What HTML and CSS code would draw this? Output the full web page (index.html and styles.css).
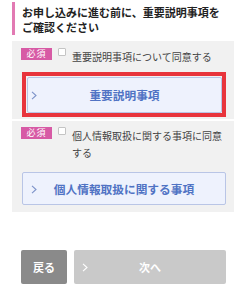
FILE: index.html
```html
<!DOCTYPE html>
<html lang="ja">
<head>
<meta charset="utf-8">
<link rel="stylesheet" href="styles.css">
</head>
<body>
<div class="page">
  <h2 class="title">お申し込みに進む前に、重要説明事項を<br>ご確認ください</h2>

  <div class="panel panel-first">
    <div class="agree">
      <span class="badge">必須</span>
      <span class="check"></span>
      <span class="agree-text">重要説明事項について同意する</span>
    </div>
    <div class="focus-ring">
      <div class="link-btn link-btn-inner">
        <svg class="chev" width="6" height="9" viewBox="0 0 6 9"><path d="M1 0.8 L5 4.5 L1 8.2" fill="none" stroke="#7d93c9" stroke-width="1.1"/></svg>
        <span class="link-label">重要説明事項</span>
      </div>
    </div>
  </div>

  <div class="panel panel-second">
    <div class="agree">
      <span class="badge">必須</span>
      <span class="check"></span>
      <span class="agree-text">個人情報取扱に関する事項に同意する</span>
    </div>
    <div class="link-btn link-btn-plain">
      <svg class="chev" width="6" height="9" viewBox="0 0 6 9"><path d="M1 0.8 L5 4.5 L1 8.2" fill="none" stroke="#7d93c9" stroke-width="1.1"/></svg>
      <span class="link-label">個人情報取扱に関する事項</span>
    </div>
  </div>

  <div class="actions">
    <div class="btn-back">戻る</div>
    <div class="btn-next">
      <svg class="chev-next" width="6" height="9" viewBox="0 0 6 9"><path d="M1 0.8 L5 4.5 L1 8.2" fill="none" stroke="#ffffff" stroke-width="1.1"/></svg>
      <span>次へ</span>
    </div>
  </div>
</div>
</body>
</html>
```

FILE: styles.css
```css
* { box-sizing: border-box; }
html, body { margin: 0; padding: 0; background: #ffffff; }
body {
  font-family: "Noto Sans CJK JP", "Noto Sans", sans-serif;
  color: #333333;
}
.page {
  width: 247px;
  padding: 2px 13px 0 12px;
}
.title {
  margin: 0;
  font-size: 11px;
  font-weight: bold;
  line-height: 15px;
  padding: 3px 0 0 7px;
  height: 33px;
  border-left: 3px solid #e27ab3;
  color: #222222;
}
.panel {
  background: #f1f1f1;
  padding: 7px 9px 2px 9px;
}
.panel-first { margin-top: 6px; }
.panel-second {
  margin-top: 2px;
  padding-top: 6px;
  padding-bottom: 7px;
}
.agree {
  display: flex;
  align-items: flex-start;
}
.badge {
  flex: none;
  width: 31px;
  height: 12px;
  background: #d75aa5;
  color: #ffffff;
  font-size: 9px;
  line-height: 12px;
  text-align: center;
  letter-spacing: 1px;
}
.check {
  flex: none;
  width: 8px;
  height: 8px;
  margin-left: 6px;
  background: #ffffff;
  border: 1px solid #c4c4c4;
  border-radius: 1px;
}
.agree-text {
  margin-left: 6px;
  font-size: 10px;
  line-height: 17px;
  color: #444444;
}
.focus-ring {
  margin: 7px -1px 0 1px;
  border: 4px solid #e8343c;
  padding: 1px 0 0 1px;
  height: 45px;
}
.link-btn {
  display: flex;
  align-items: center;
  position: relative;
  justify-content: center;
  background: #eef2fd;
  border: 1px solid #b9c5e6;
  border-radius: 2px;
}
.link-btn-inner {
  height: 36px;
}
.link-btn-plain {
  margin: 11px -1px 0 1px;
  height: 33px;
}
.chev {
  position: absolute;
  left: 8px;
  top: 50%;
  margin-top: -4px;
}
.link-btn-inner .chev { left: 3px; }
.link-label {
  font-size: 11.7px;
  font-weight: bold;
  color: #5073c4;
  line-height: 16px;
}
.actions {
  display: flex;
  gap: 7px;
  margin: 38px 0 0 9px;
  width: 205px;
}
.btn-back {
  flex: none;
  width: 46px;
  height: 34px;
  background: #8a8a8a;
  border-radius: 2px;
  color: #ffffff;
  font-size: 11px;
  font-weight: bold;
  line-height: 34px;
  text-align: center;
}
.btn-next {
  flex: 1;
  height: 34px;
  background: #c9c9c9;
  border-radius: 2px;
  color: #ffffff;
  font-size: 11px;
  font-weight: bold;
  line-height: 34px;
  text-align: center;
  position: relative;
}
.chev-next {
  position: absolute;
  left: 8px;
  top: 13px;
}
```
